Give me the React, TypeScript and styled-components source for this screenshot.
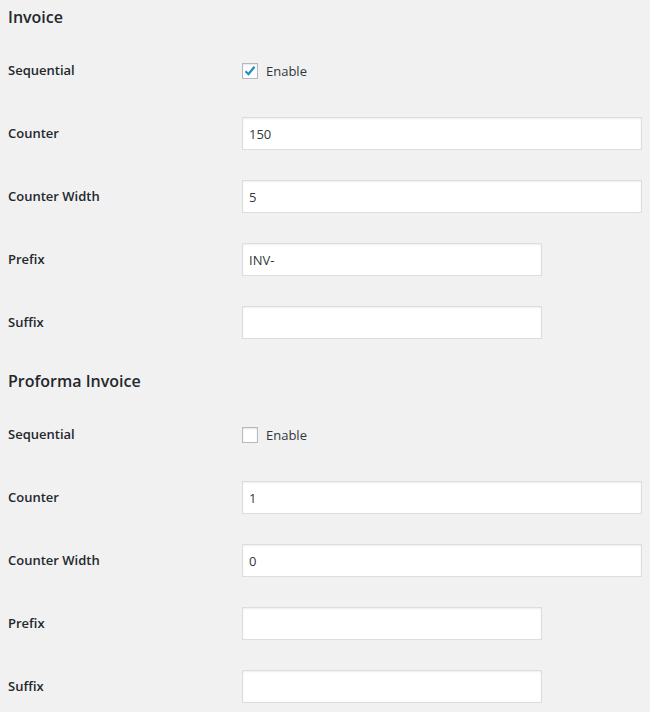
import React from "react";
import styled, { createGlobalStyle } from "styled-components";

const Global = createGlobalStyle`
  html, body { margin: 0; padding: 0; background: #f1f1f1; }
  body { font-family: "Open Sans", "Noto Sans", sans-serif; color: #23282d; }
  * { box-sizing: border-box; }
`;

const Page = styled.div`
  padding: 6px 8px 0 8px;
  display: flex;
  flex-direction: column;
`;

const Heading = styled.h2<{ $first?: boolean }>`
  margin: ${(p) => (p.$first ? "0" : "16px")} 0 11px 0;
  height: 22px;
  line-height: 22px;
  font-size: 16px;
  font-weight: 600;
  color: #23282d;
`;

const Table = styled.div`
  display: flex;
  flex-direction: column;
`;

const Row = styled.div`
  display: grid;
  grid-template-columns: 234px 1fr;
  height: 63px;
  align-items: center;
`;

const Label = styled.div`
  font-size: 13px;
  font-weight: 600;
  color: #23282d;
  margin-top: -1px;
`;

const Input = styled.input<{ $wide?: boolean }>`
  width: ${(p) => (p.$wide ? "400px" : "300px")};
  height: 33px;
  border: 1px solid #ddd;
  background: #fff;
  box-shadow: inset 0 1px 2px rgba(0, 0, 0, 0.07);
  padding: 0 6px;
  font-family: "Open Sans", "Noto Sans", sans-serif;
  font-size: 13px;
  color: #32373c;
  outline: none;
`;

const CheckLabel = styled.label`
  display: flex;
  align-items: center;
  gap: 8px;
  font-size: 13px;
  color: #32373c;
`;

const Box = styled.span`
  width: 16px;
  height: 16px;
  border: 1px solid #b4b9be;
  background: #fff;
  box-shadow: inset 0 1px 2px rgba(0, 0, 0, 0.1);
  display: flex;
  align-items: center;
  justify-content: center;
`;

const Check = ({ checked }: { checked: boolean }) => (
  <CheckLabel>
    <Box>
      {checked && (
        <svg width="14" height="14" viewBox="0 0 14 14">
          <path d="M2.5 7.2 L5.5 10.2 L11.5 2.8" fill="none" stroke="#1e8cbe" strokeWidth="2.2" strokeLinejoin="miter" />
        </svg>
      )}
    </Box>
    Enable
  </CheckLabel>
);

type Sec = { title: string; checked: boolean; counter: string; width: string; prefix: string; suffix: string };

const sections: Sec[] = [
  { title: "Invoice", checked: true, counter: "150", width: "5", prefix: "INV-", suffix: "" },
  { title: "Proforma Invoice", checked: false, counter: "1", width: "0", prefix: "", suffix: "" },
];

export default function App() {
  return (
    <>
      <Global />
      <Page>
        {sections.map((s, i) => (
          <React.Fragment key={s.title}>
            <Heading $first={i === 0}>{s.title}</Heading>
            <Table>
              <Row>
                <Label>Sequential</Label>
                <Check checked={s.checked} />
              </Row>
              <Row>
                <Label>Counter</Label>
                <Input $wide defaultValue={s.counter} />
              </Row>
              <Row>
                <Label>Counter Width</Label>
                <Input $wide defaultValue={s.width} />
              </Row>
              <Row>
                <Label>Prefix</Label>
                <Input defaultValue={s.prefix} />
              </Row>
              <Row>
                <Label>Suffix</Label>
                <Input defaultValue={s.suffix} />
              </Row>
            </Table>
          </React.Fragment>
        ))}
      </Page>
    </>
  );
}
